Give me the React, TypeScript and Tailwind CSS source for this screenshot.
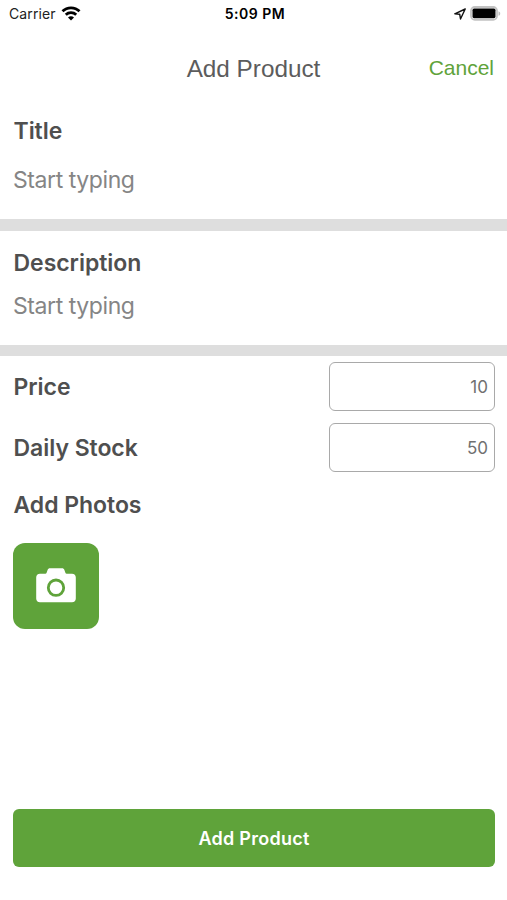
import React from "react";

const label = "whitespace-nowrap pl-[0.5px] text-[23px] font-semibold leading-7 tracking-[-0.04px] text-[#4f4f4f]";
const placeholder = "whitespace-nowrap text-[23px] leading-7 tracking-[-0.42px] text-[#858585]";

function WifiIcon() {
  return (
    <svg width="20" height="15" viewBox="0 0 20 15" fill="none" stroke="#000" strokeWidth="2.8">
      <path d="M1.5 5.3C6.2.6 13.8.6 18.5 5.3" />
      <path d="M4.8 8.7c2.9-2.8 7.5-2.8 10.4 0" />
      <path d="M10 14.4 7 11.5c1.7-1.6 4.3-1.6 6 0Z" fill="#000" stroke="none" />
    </svg>
  );
}

function LocationIcon() {
  return (
    <svg width="12" height="12" viewBox="0 0 12 12" fill="none" stroke="#111" strokeWidth="1.4" strokeLinejoin="round">
      <path d="M11.2 1 .8 5.8l4.9.4.8 4.8Z" />
    </svg>
  );
}

function BatteryIcon() {
  return (
    <svg width="31" height="15" viewBox="0 0 31 15">
      <rect x="1" y="1" width="26" height="12.8" rx="3.8" fill="#fff" stroke="#c2c2c2" strokeWidth="1.8" />
      <rect x="2.5" y="2.6" width="23" height="9.6" rx="1.6" fill="#000" />
      <path d="M28.5 5.2c2.3.9 2.3 3.7 0 4.6Z" fill="#bdbdbd" />
    </svg>
  );
}

function CameraIcon() {
  return (
    <svg className="mb-px mr-px" width="40" height="35" viewBox="0 0 40 35">
      <path
        d="M4 5.7h5.3c.7 0 1.1-.4 1.3-1l.9-2.5C12 .8 12.8.3 14 .3h12c1.2 0 2 .5 2.5 1.9l.9 2.5c.2.6.6 1 1.3 1H36c2.4 0 3.8 1.4 3.8 3.8v20.9c0 2.4-1.4 3.8-3.8 3.8H4C1.6 34.2.2 32.8.2 30.4V9.5C.2 7.1 1.6 5.7 4 5.7Z"
        fill="#fff"
      />
      <circle cx="20" cy="19.7" r="7.7" fill="#fff" stroke="#5fa33a" strokeWidth="2.8" />
    </svg>
  );
}

function AmountRow({ name, value }: { name: string; value: string }) {
  return (
    <div className="flex h-[49px] items-center justify-between">
      <span className={label}>{name}</span>
      <div className="flex h-[49px] w-[166px] items-center justify-end rounded-[6px] border border-[#a9a9a9] pr-[6px] pt-[2px] text-[17px] text-[#707070]">
        {value}
      </div>
    </div>
  );
}

export default function App() {
  return (
    <main className="flex h-[900px] w-full flex-col overflow-hidden bg-white font-['Inter',sans-serif]">
      <div className="grid h-[28px] grid-cols-3 items-center pl-[9px] pr-[6px] text-[14px] leading-none text-[#222]">
        <div className="flex items-center gap-[5px] pb-px">
          <span className="pt-px tracking-[0.1px]">Carrier</span>
          <WifiIcon />
        </div>
        <span className="whitespace-nowrap text-center font-semibold tracking-[0.5px] text-black">5:09 PM</span>
        <div className="flex items-center justify-end gap-[4px] pb-px">
          <LocationIcon />
          <BatteryIcon />
        </div>
      </div>

      <header className="grid h-[80px] grid-cols-[1fr_auto_1fr] items-center px-[13px] font-['Liberation_Sans',sans-serif]">
        <h1 className="col-start-2 whitespace-nowrap pt-[2px] text-[24.3px] text-[#5c5c5c]">Add Product</h1>
        <button className="justify-self-end text-[21px] text-[#5fa33a]">Cancel</button>
      </header>

      <section className="h-[111px] px-[13px] pt-[9px]">
        <h2 className={label}>Title</h2>
        <p className={`${placeholder} mt-[21px]`}>Start typing</p>
      </section>
      <div className="h-3 bg-[#dedede]" />
      <section className="h-[114px] px-[13px] pt-[18px]">
        <h2 className={label}>Description</h2>
        <p className={`${placeholder} mt-[15px]`}>Start typing</p>
      </section>
      <div className="h-[11px] bg-[#dedede]" />

      <section className="flex flex-col px-[13px] pt-[6px]">
        <div className="-mr-px flex flex-col gap-3">
          <AmountRow name="Price" value="10" />
          <AmountRow name="Daily Stock" value="50" />
        </div>
        <h2 className={`${label} mt-[19px]`}>Add Photos</h2>
        <button className="mt-[24px] flex size-[86px] items-center justify-center rounded-[12px] bg-[#5fa33a]">
          <CameraIcon />
        </button>
      </section>

      <button className="mb-[33px] ml-[13px] mr-[12px] mt-auto h-[58px] shrink-0 rounded-[6px] bg-[#5fa33a] text-[18px] font-semibold tracking-[0.25px] text-white">
        Add Product
      </button>
    </main>
  );
}
